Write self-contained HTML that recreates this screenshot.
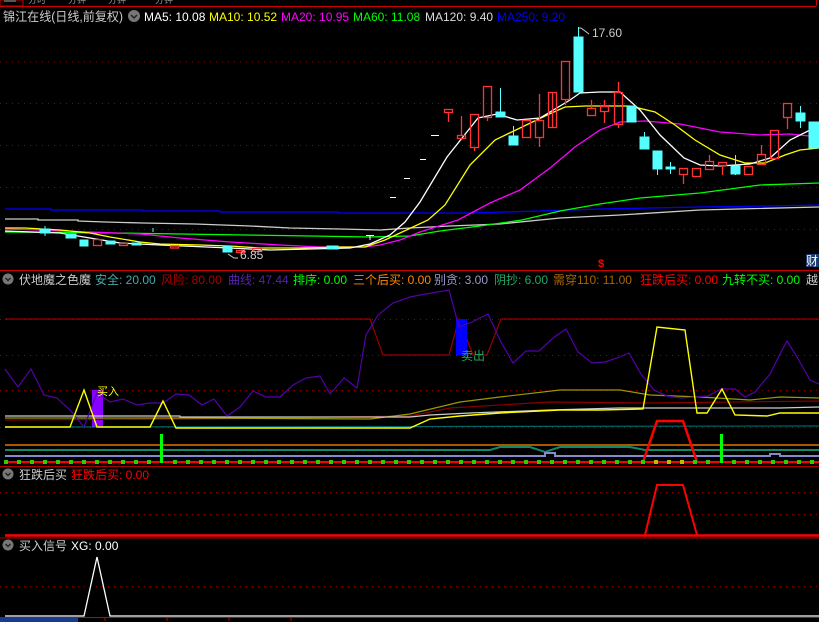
<!DOCTYPE html>
<html><head><meta charset="utf-8"><style>
html,body{margin:0;padding:0;background:#000;width:819px;height:622px;overflow:hidden}
svg{display:block}
text{font-family:"Liberation Sans","Noto Sans CJK SC",sans-serif;font-size:12px}
</style></head><body>
<svg width="819" height="622" viewBox="0 0 819 622" xmlns="http://www.w3.org/2000/svg">
<rect width="819" height="622" fill="#000"/>
<rect x="0" y="0" width="23" height="6" fill="none" stroke="#c00" stroke-width="1"/>
<rect x="4" y="0" width="12" height="2" fill="#555"/>
<g fill="#999"><text x="28" y="3" style="font-size:9px">分时</text><text x="68" y="3" style="font-size:9px">分钟</text><text x="108" y="3" style="font-size:9px">分钟</text><text x="155" y="3" style="font-size:9px">分钟</text></g>
<line x1="0" y1="6.5" x2="816" y2="6.5" stroke="#c00"/><line x1="816.5" y1="0" x2="816.5" y2="6" stroke="#c00"/>
<text x="3" y="21" fill="#ccc" style="font-size:12.5px" textLength="120" lengthAdjust="spacingAndGlyphs">锦江在线(日线,前复权)</text>
<circle cx="134" cy="16" r="6" fill="#777"/><path d="M131 15l3 3 3-3" stroke="#222" stroke-width="1.5" fill="none"/>
<text x="144" y="21" fill="#fff">MA5: 10.08</text>
<text x="209" y="21" fill="#ff0">MA10: 10.52</text>
<text x="281" y="21" fill="#f0f">MA20: 10.95</text>
<text x="353" y="21" fill="#0f0">MA60: 11.08</text>
<text x="425" y="21" fill="#ddd">MA120: 9.40</text>
<text x="497" y="21" fill="#00f">MA250: 9.20</text>
<g stroke="#900" stroke-dasharray="1,5">
<line x1="0" y1="62" x2="819" y2="62"/><line x1="0" y1="103.5" x2="819" y2="103.5"/><line x1="0" y1="145.5" x2="819" y2="145.5"/><line x1="0" y1="187.5" x2="819" y2="187.5"/><line x1="0" y1="229.5" x2="819" y2="229.5"/></g>
<g fill="none" stroke-width="1.3">
<polyline stroke="#00f" points="5,209 51,209 51,210 143,210 143,211 220,211 220,212 338,212 338,213 470,213 540,211 600,209 700,207 770,206 819,205"/>
<polyline stroke="#ccc" points="5,219 38,219 38,220 78,220 78,221 105,222 143,223 195,224 250,226 290,228 340,229 380,230 410,228 450,226 500,224 560,218 620,215 700,210 819,207"/>
<polyline stroke="#0f0" points="5,232 115,233 180,234 245,235 310,236 370,237 410,236 440,231 480,226 522,220 560,211 600,204 640,198 700,193 760,185 819,183"/>
<polyline stroke="#f0f" points="5,229 40,230 65,231 90,232 140,234 180,238 230,242 280,245 320,247 365,247 380,245 400,240 420,232 458,220 490,203 520,190 550,168 575,147 600,130 620,122 645,121 680,124 720,132 760,135 790,134 819,137"/>
<polyline stroke="#ff0" points="5,228 25,228 60,230 90,233 110,237 140,242 160,244 200,245 230,246 260,248 300,248 340,247 365,247 385,240 400,233 428,220 445,205 470,165 495,140 520,128 545,116 565,107 585,106 630,106 655,112 675,125 695,140 720,155 745,163 765,163 785,155 800,150 819,148"/>
<polyline stroke="#fff" points="5,231 60,233 90,238 120,243 160,245 230,248 270,250 310,249 350,248 370,244 390,235 405,222 420,202 447,157 478,118 497,114 517,120 540,118 570,100 580,93 600,92 620,92 640,110 660,135 684,158 700,165 720,166 750,164 770,158 790,140 810,130 819,131"/>
</g>
<g stroke-width="1.3" fill="none" stroke="#f33">
<path d="M448.5 112v10M461.5 116v19M474.5 147v4M487.5 117v4M539.5 94v26M539.5 137v10M552.5 127v-35M565.5 99v6M591.5 100v8M604.5 100v6M604.5 111v12M618.5 82v10M618.5 124v4M683.5 174v10M709.5 155v6M722.5 165v10M761.5 145v9M787.5 117v12"/>
<rect x="444.5" y="109.5" width="8" height="3"/><rect x="457.5" y="135.5" width="8" height="3"/><rect x="470.5" y="114.5" width="8" height="33"/><rect x="483.5" y="86.5" width="8" height="31"/><rect x="522.5" y="120.5" width="8" height="17"/><rect x="535.5" y="120.5" width="8" height="17"/><rect x="548.5" y="92.5" width="8" height="35"/><rect x="561.5" y="61.5" width="8" height="38"/><rect x="587.5" y="108.5" width="8" height="7"/><rect x="600.5" y="106.5" width="8" height="5"/><rect x="614.5" y="92.5" width="8" height="32"/><rect x="679.5" y="168.5" width="8" height="6"/><rect x="692.5" y="168.5" width="8" height="8"/><rect x="705.5" y="161.5" width="8" height="8"/><rect x="718.5" y="162.5" width="8" height="3"/><rect x="744.5" y="166.5" width="8" height="8"/><rect x="757.5" y="154.5" width="8" height="10"/><rect x="770.5" y="130.5" width="8" height="28"/><rect x="783.5" y="103.5" width="8" height="14"/>
<rect x="93.5" y="239.5" width="8" height="6"/><rect x="119.5" y="243.5" width="8" height="2"/><rect x="170.5" y="246" width="8" height="2"/><rect x="236.5" y="250.5" width="8" height="2"/><rect x="252.5" y="248.5" width="9" height="3"/>
</g>
<g fill="#5ff" stroke="#5ff">
<path d="M500.5 88v24M513.5 126v10M578.5 27v10M644.5 132v5M657.5 169v6M670.5 162v12M735.5 155v20M800.5 106v22M45 226v10M153 228v4"/>
<rect x="496" y="112" width="9" height="5"/><rect x="509" y="136" width="9" height="9"/><rect x="574" y="37" width="9" height="55"/><rect x="627" y="106" width="9" height="16"/><rect x="640" y="137" width="9" height="12"/><rect x="653" y="151" width="9" height="18"/><rect x="666" y="167" width="9" height="2"/><rect x="731" y="166" width="9" height="8"/><rect x="796" y="113" width="9" height="8"/><rect x="809" y="122" width="10" height="26"/>
<rect x="40" y="229" width="10" height="4"/><rect x="66" y="234" width="10" height="4"/><rect x="80" y="240" width="8" height="6"/><rect x="106" y="241" width="9" height="3"/><rect x="132" y="243" width="9" height="2"/><rect x="223" y="246" width="9" height="6"/><rect x="327" y="246" width="11" height="3"/>
</g>
<g stroke="#fff"><path d="M431 135.5h8M420 159.5h6M404 178.5h6M390 197.5h6M366 235.5h8M370 235v5"/></g>
<text x="592" y="37" fill="#ccc">17.60</text><path d="M579 28h2M581 28l8 6" stroke="#ccc" fill="none"/>
<text x="240" y="259" fill="#ccc">6.85</text><path d="M228 254l6 4h4" stroke="#ccc" fill="none"/>
<text x="598" y="267" fill="#f00" style="font-size:11px;font-weight:bold">$</text>
<rect x="806" y="254" width="13" height="13" fill="#1a3a70"/><text x="806" y="265" fill="#fff">财</text>
<line x1="0" y1="270.5" x2="819" y2="270.5" stroke="#c00"/>
<circle cx="8" cy="279" r="5.5" fill="#777"/><path d="M5.5 278l2.5 2.5 2.5-2.5" stroke="#222" stroke-width="1.5" fill="none"/>
<text x="19" y="284" fill="#ccc">伏地魔之色魔</text>
<text x="95" y="284" fill="#4aa">安全: 20.00</text>
<text x="161" y="284" fill="#a00">风险: 80.00</text>
<text x="228" y="284" fill="#52a">曲线: 47.44</text>
<text x="293" y="284" fill="#0f0">排序: 0.00</text>
<text x="353" y="284" fill="#f80">三个后买: 0.00</text>
<text x="434" y="284" fill="#99c">别贪: 3.00</text>
<text x="494" y="284" fill="#2a6">阴抄: 6.00</text>
<text x="553" y="284" fill="#a60">需穿110: 11.00</text>
<text x="640" y="284" fill="#f00">狂跌后买: 0.00</text>
<text x="722" y="284" fill="#0f0">九转不买: 0.00</text>
<text x="806" y="284" fill="#ccc">越</text>
<g stroke="#900" stroke-dasharray="1,5"><line x1="0" y1="319.5" x2="819" y2="319.5"/><line x1="0" y1="355.5" x2="819" y2="355.5"/><line x1="0" y1="390.5" x2="819" y2="390.5"/><line x1="0" y1="427.5" x2="819" y2="427.5"/></g>
<polyline fill="none" stroke="#900" stroke-width="1.2" points="5,319 370,319 383,355 449,355 459,319 473,355 487,355 501,319 819,319"/>
<rect x="92" y="390" width="11" height="37" fill="#80f"/>
<rect x="456" y="319" width="11" height="36" fill="#00f"/>
<g fill="none" stroke-width="1.2">
<polyline stroke="#0aa" stroke-opacity=".6" points="5,427 819,426"/>
<polyline stroke="#800" points="5,420 190,419 410,416 450,408 550,402 650,403 819,401"/>
<polyline stroke="#990" points="5,418 180,418 370,419 410,414 460,402 500,397 560,390 620,390 650,395 700,397 750,400 780,397 819,398"/>
<polyline stroke="#ccc" points="5,416 180,416 180,417 410,417 430,415 470,413 550,410 619,408 780,408 819,407"/>
<polyline stroke="#50a" points="5,369 18,387 31,369 44,395 57,398 70,410 84,427 97,393 110,402 123,399 137,405 150,403 163,403 176,394 189,395 202,405 214,399 227,416 240,407 253,391 266,397 280,397 293,385 306,378 320,376 330,394 344,378 357,388 366,335 378,315 393,303 410,297 420,295 449,290 459,327 472,322 488,314 500,340 513,363 526,351 539,351 553,338 566,329 578,352 592,363 605,362 617,358 629,353 641,374 654,390 667,396 681,398 695,397 708,396 721,389 735,389 745,397 755,392 770,374 781,352 787,341 797,357 810,380 819,384"/>
<polyline stroke="#ff0" stroke-width="1.4" points="5,427 70,427 84,390 97,427 150,427 163,401 176,428 410,428 430,419 460,416 500,413 560,410 600,410 643,409 657,327 685,330 697,413 707,413 722,389 735,415 767,416 780,413 819,413"/>
</g>
<text x="97" y="395" fill="#ff0" style="font-size:11px">买入</text>
<text x="461" y="360" fill="#2a6">卖出</text>
<g stroke-width="2" fill="none">
<line x1="5" y1="445" x2="819" y2="445" stroke="#a50"/>
<polyline stroke="#186" points="5,450 490,450 500,447 530,447 545,452 560,447 630,447 645,450 819,450"/>
<polyline stroke="#88c" points="5,456 545,456 545,453 555,453 555,456 770,456 770,454 780,454 780,456 819,456"/>
<line x1="5" y1="462" x2="819" y2="462" stroke="#f00"/>
<polyline stroke="#f00" stroke-width="2.5" points="643,462 657,421 683,421 697,462"/>
</g>
<rect x="160" y="434" width="3" height="29" fill="#0f0"/><rect x="720" y="434" width="3" height="29" fill="#0f0"/>
<g fill="#3c0">
<rect x="4" y="460" width="4" height="4"/><rect x="17" y="460" width="4" height="4"/><rect x="30" y="460" width="4" height="4"/><rect x="43" y="460" width="4" height="4"/><rect x="56" y="460" width="4" height="4"/><rect x="69" y="460" width="4" height="4"/><rect x="82" y="460" width="4" height="4"/><rect x="95" y="460" width="4" height="4"/><rect x="108" y="460" width="4" height="4"/><rect x="121" y="460" width="4" height="4"/><rect x="134" y="460" width="4" height="4"/><rect x="147" y="460" width="4" height="4"/><rect x="173" y="460" width="4" height="4"/><rect x="186" y="460" width="4" height="4"/><rect x="199" y="460" width="4" height="4"/><rect x="212" y="460" width="4" height="4"/><rect x="225" y="460" width="4" height="4"/><rect x="238" y="460" width="4" height="4"/><rect x="251" y="460" width="4" height="4"/><rect x="264" y="460" width="4" height="4"/><rect x="277" y="460" width="4" height="4"/><rect x="290" y="460" width="4" height="4"/><rect x="303" y="460" width="4" height="4"/><rect x="316" y="460" width="4" height="4"/><rect x="329" y="460" width="4" height="4"/><rect x="342" y="460" width="4" height="4"/><rect x="355" y="460" width="4" height="4"/><rect x="368" y="460" width="4" height="4"/><rect x="381" y="460" width="4" height="4"/><rect x="394" y="460" width="4" height="4"/><rect x="407" y="460" width="4" height="4"/><rect x="420" y="460" width="4" height="4"/><rect x="433" y="460" width="4" height="4"/><rect x="446" y="460" width="4" height="4"/><rect x="459" y="460" width="4" height="4"/><rect x="472" y="460" width="4" height="4"/><rect x="485" y="460" width="4" height="4"/><rect x="498" y="460" width="4" height="4"/><rect x="511" y="460" width="4" height="4"/><rect x="524" y="460" width="4" height="4"/><rect x="537" y="460" width="4" height="4"/><rect x="550" y="460" width="4" height="4"/><rect x="563" y="460" width="4" height="4"/><rect x="576" y="460" width="4" height="4"/><rect x="589" y="460" width="4" height="4"/><rect x="602" y="460" width="4" height="4"/><rect x="615" y="460" width="4" height="4"/><rect x="628" y="460" width="4" height="4"/><rect x="641" y="460" width="4" height="4"/><rect x="654" y="460" width="4" height="4" fill="#bb0"/><rect x="667" y="460" width="4" height="4" fill="#bb0"/><rect x="680" y="460" width="4" height="4" fill="#bb0"/><rect x="693" y="460" width="4" height="4"/><rect x="706" y="460" width="4" height="4"/><rect x="732" y="460" width="4" height="4"/><rect x="745" y="460" width="4" height="4"/><rect x="758" y="460" width="4" height="4"/><rect x="771" y="460" width="4" height="4"/><rect x="784" y="460" width="4" height="4"/><rect x="797" y="460" width="4" height="4"/><rect x="810" y="460" width="4" height="4"/>
</g>
<line x1="0" y1="466.5" x2="819" y2="466.5" stroke="#a00"/>
<circle cx="8" cy="474" r="5.5" fill="#777"/><path d="M5.5 473l2.5 2.5 2.5-2.5" stroke="#222" stroke-width="1.5" fill="none"/>
<text x="19" y="479" fill="#ccc">狂跌后买</text>
<text x="71" y="479" fill="#f00">狂跌后买: 0.00</text>
<g stroke="#900" stroke-dasharray="1,5"><line x1="0" y1="492.5" x2="819" y2="492.5"/><line x1="0" y1="514.5" x2="819" y2="514.5"/><line x1="0" y1="586.5" x2="819" y2="586.5"/></g>
<line x1="5" y1="535.5" x2="819" y2="535.5" stroke="#f00" stroke-width="2.5"/>
<polyline fill="none" stroke="#f00" stroke-width="2" points="645,535 657,485 683,485 697,535"/>
<line x1="0" y1="538" x2="819" y2="538" stroke="#a00"/>
<circle cx="8" cy="545" r="5.5" fill="#777"/><path d="M5.5 544l2.5 2.5 2.5-2.5" stroke="#222" stroke-width="1.5" fill="none"/>
<text x="19" y="550" fill="#ccc">买入信号</text>
<text x="71" y="550" fill="#fff">XG: 0.00</text>
<polyline fill="none" stroke="#fff" stroke-width="1.3" points="5,616 84,616 97,557 110,616 819,616"/>
<line x1="0" y1="617.5" x2="819" y2="617.5" stroke="#c00"/>
<rect x="0" y="618" width="78" height="4" fill="#1a3a90"/>
<g stroke="#c00"><path d="M105 618v3M167 618v3M229 618v3M291 618v3"/></g>
</svg>
</body></html>
